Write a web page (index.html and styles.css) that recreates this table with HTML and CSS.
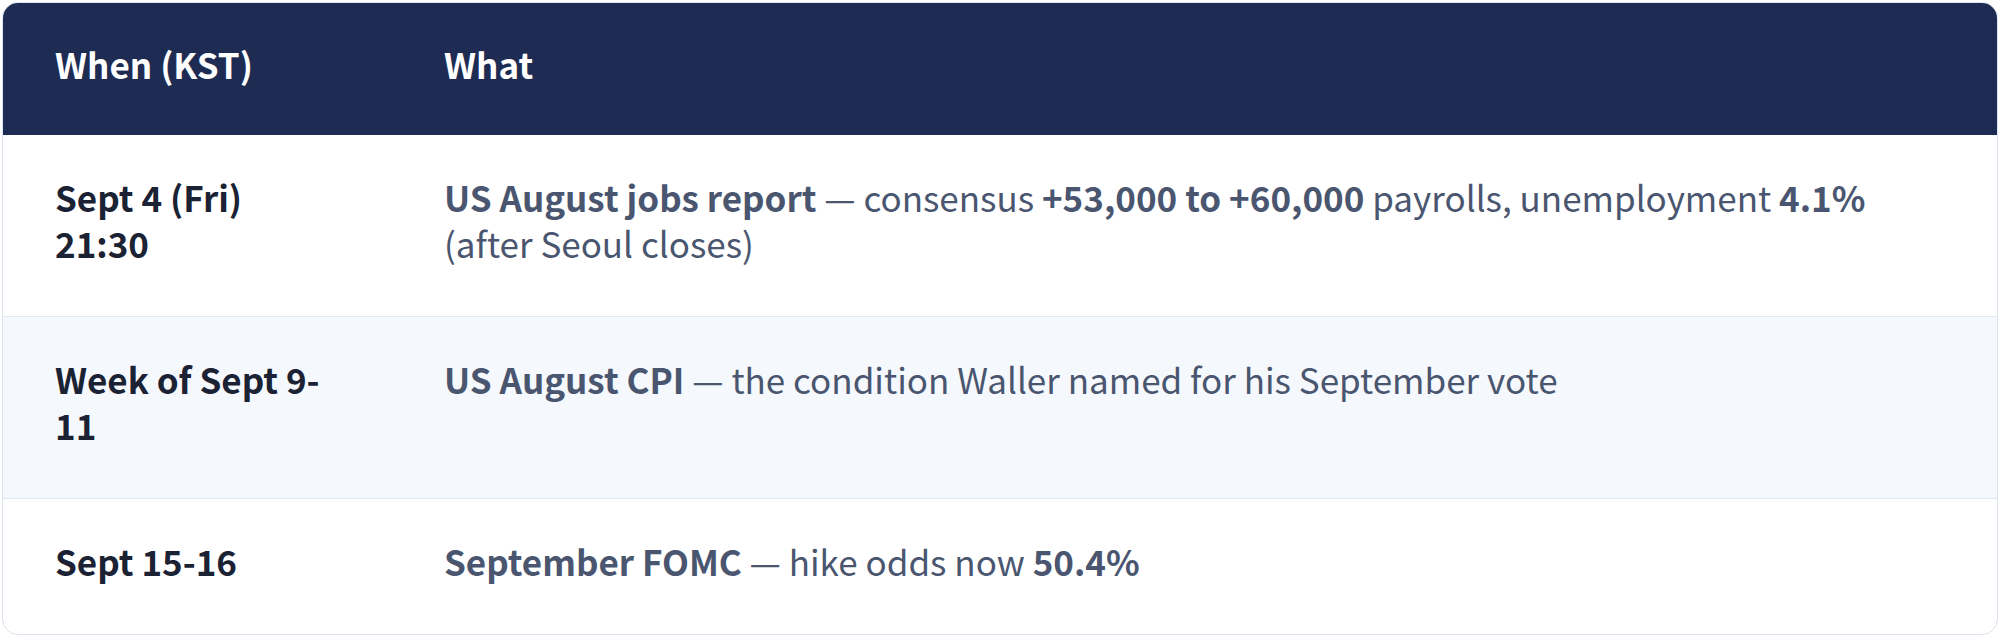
FILE: index.html
```html
<!DOCTYPE html>
<html lang="en">
<head>
<meta charset="utf-8">
<title>Schedule</title>
<link rel="stylesheet" href="styles.css">
</head>
<body>
<div class="card">
  <table class="sched">
    <thead>
      <tr>
        <th class="when">When (KST)</th>
        <th class="what">What</th>
      </tr>
    </thead>
    <tbody>
      <tr>
        <td class="when">Sept 4 (Fri) 21:30</td>
        <td class="what"><strong>US August jobs report</strong> — consensus <strong>+53,000 to +60,000</strong> payrolls, unemployment <strong>4.1%</strong> (after Seoul closes)</td>
      </tr>
      <tr class="alt">
        <td class="when">Week of Sept 9-11</td>
        <td class="what"><strong>US August CPI</strong> — the condition Waller named for his September vote</td>
      </tr>
      <tr>
        <td class="when">Sept 15-16</td>
        <td class="what"><strong>September FOMC</strong> — hike odds now <strong>50.4%</strong></td>
      </tr>
    </tbody>
  </table>
</div>
</body>
</html>
```

FILE: styles.css
```css
html, body {
  margin: 0;
  padding: 0;
  background: #ffffff;
}
body {
  font-family: "Noto Sans CJK KR", "Noto Sans", sans-serif;
  font-size: 35px;
  line-height: 46px;
}
.card {
  margin: 2px;
  border: 1px solid #dde3ef;
  border-radius: 16px;
  overflow: hidden;
  background: #ffffff;
}
.sched {
  width: 100%;
  border-collapse: collapse;
}
.sched th,
.sched td {
  text-align: left;
  vertical-align: top;
  padding: 39px 52px 50px;
}
.sched th {
  background: #1e2c54;
  color: #ffffff;
  font-weight: 700;
  padding-top: 38px;
  padding-bottom: 48px;
}
.sched td {
  border-top: 1px solid #e2e8f0;
}
.sched thead + tbody tr:first-child td {
  border-top: none;
}
.sched .when {
  width: 285px;
}
.sched td.when {
  color: #1a2233;
  font-weight: 700;
}
.sched td.what {
  color: #4a5670;
}
.sched td.what strong {
  font-weight: 700;
}
.sched tr.alt td {
  background: #f5f8fc;
}
```
